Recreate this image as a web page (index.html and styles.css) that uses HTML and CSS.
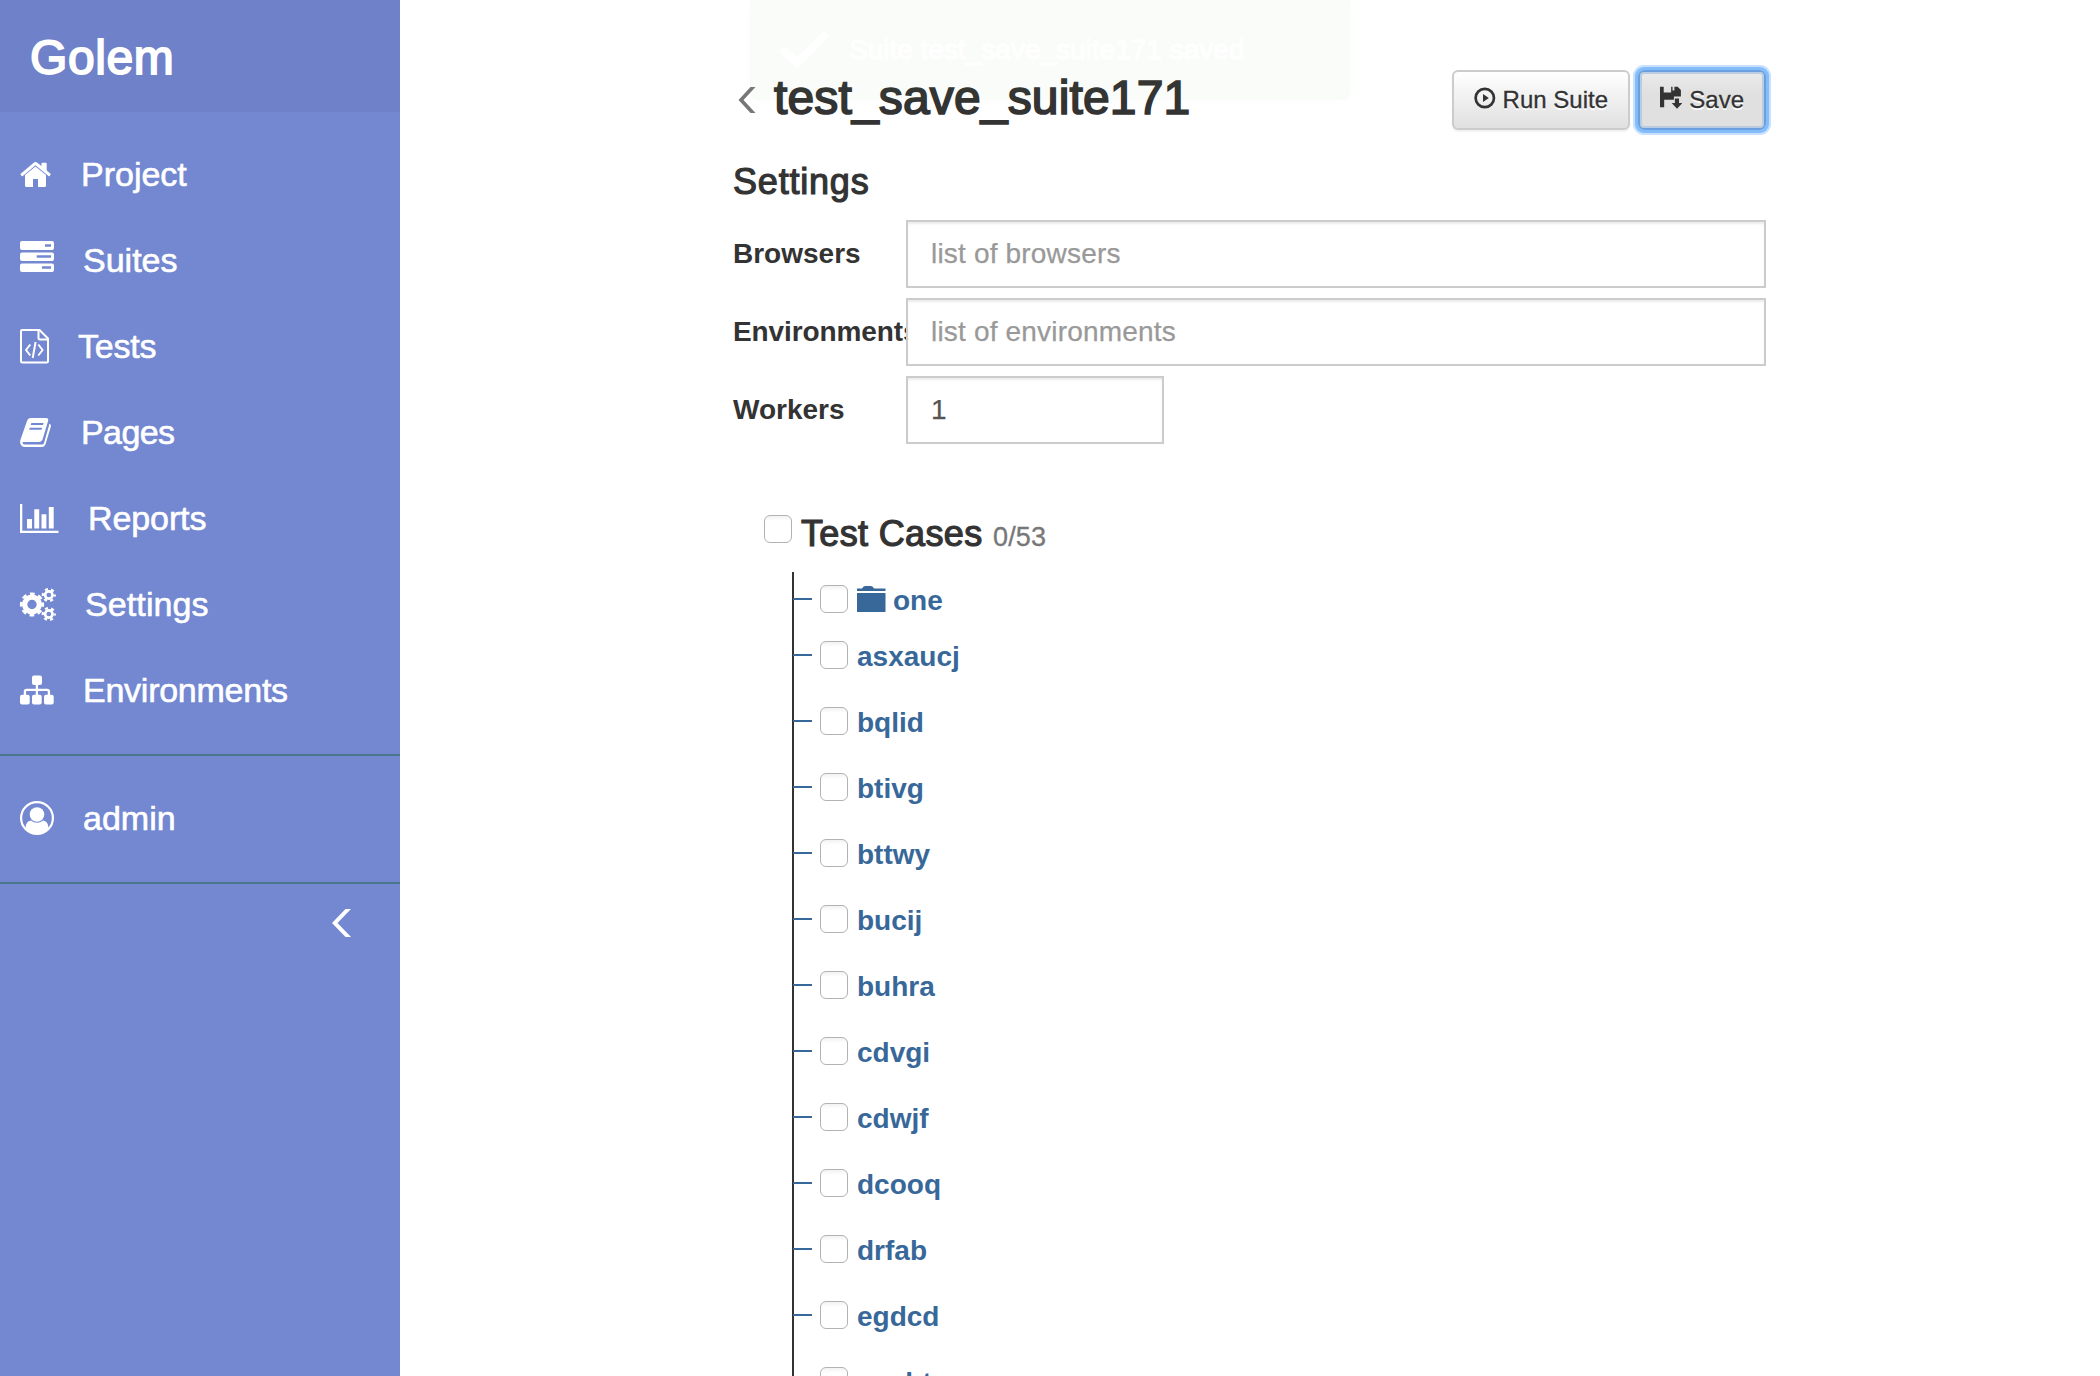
FILE: index.html
```html
<!DOCTYPE html>
<html lang="en">
<head>
<meta charset="utf-8">
<title>Golem - test_save_suite171</title>
<link rel="stylesheet" href="styles.css">
</head>
<body>
<div class="layout">
  <aside class="sidebar">
    <div class="brand">Golem</div>
    <nav class="nav">
      <a class="nav-item project"><svg class="ico" width="40" height="36" viewBox="0 0 40 36"><path d="M5 18v10.500q0 1.500 1.500 1.500H13v-8h5v8h6.500q1.500 0 1.500-1.500V18l-10.500-8.600z"/><path d="M15.500 5q1 0 1.800.7L21.500 9V6.500q0-.8.8-.8h3.600q.8 0 .8.8v7l3.800 3.200q.5.400 0 1l-1 1.300q-.5.500-1 0L15.500 8.200 2.800 19q-.6.500-1.100 0l-1-1.300q-.5-.6 0-1L13.700 5.700q.8-.7 1.800-.7z"/></svg><span>Project</span></a>
      <a class="nav-item suites"><svg class="ico" width="40" height="36" viewBox="0 0 40 36"><path fill-rule="evenodd" d="M2-2H32q2 0 2 2v5q0 2-2 2H2Q0 7 0 5V0Q0-2 2-2zM25 1.300v2.400h6V1.300zM2 9.500H32q2 0 2 2v4.500q0 2-2 2H2q-2 0-2-2v-4.500q0-2 2-2zM16.700 12.300v2.400H31v-2.400zM2 20.500H32q2 0 2 2V27q0 2-2 2H2q-2 0-2-2v-4.500q0-2 2-2zM22 23.300v2.400h9v-2.400z"/></svg><span>Suites</span></a>
      <a class="nav-item tests"><svg class="ico" width="40" height="36" viewBox="0 0 40 36"><g fill="none" stroke="#fff" stroke-width="2" stroke-linejoin="round"><path d="M2 1H19.500L28 9.500V32q0 1.500-1.500 1.500H2.500Q1 33.500 1 32V2Q1 1 2 1z"/><path d="M18.500 1V9q0 1.500 1.500 1.500h8"/><path d="M10.300 15.500L6 21l4.300 5.500M18.300 15.500L22.600 21l-4.300 5.500M15.600 13l-2.900 16" /></g></svg><span>Tests</span></a>
      <a class="nav-item pages"><svg class="ico" width="40" height="36" viewBox="0 0 40 36"><path fill-rule="evenodd" d="M11 3H26q3 0 2 3.200L22.700 24q-1 3-4 3H3.800q-1.600 0-1.300 1 .4 1.500 3 1.500H22q1.500 0 2-1.600L29 10.500q.2-.8.100-1.800 2.300.6 1.700 3L25.600 29q-1 3-3.800 3H5Q1.500 32 .3 28.500-.2 26.500.4 25L7 6Q8 3 11 3zM11.300 8l-.6 2H23l.6-2zM9.800 12.800l-.6 2H21.500l.6-2z"/></svg><span>Pages</span></a>
      <a class="nav-item reports"><svg class="ico" width="40" height="36" viewBox="0 0 40 36"><path d="M0 3h2.300v26.700H38.500V32H0zM7 18h5v9.500H7zM14.300 8.300h4.900v19.200h-4.900zM21.500 13.200h4.900v14.300h-4.900zM28.800 6h4.900v21.500h-4.900z"/></svg><span>Reports</span></a>
      <a class="nav-item settings"><svg class="ico" width="40" height="36" viewBox="0 0 40 36"><g fill="none" stroke="#fff"><circle cx="12" cy="17.500" r="7.300" stroke-width="5.200"/><circle cx="12" cy="17.500" r="10.700" stroke-width="2.800" stroke-dasharray="4.700 3.700" stroke-dashoffset="2.350"/><circle cx="28.800" cy="8" r="3.700" stroke-width="2.700"/><circle cx="28.800" cy="8" r="5.900" stroke-width="2.400" stroke-dasharray="3 3.180" stroke-dashoffset="1.500"/><circle cx="28.800" cy="27" r="3.700" stroke-width="2.700"/><circle cx="28.800" cy="27" r="5.900" stroke-width="2.400" stroke-dasharray="3 3.180" stroke-dashoffset="1.500"/></g></svg><span>Settings</span></a>
      <a class="nav-item environments"><svg class="ico" width="40" height="36" viewBox="0 0 40 36"><rect x="12" y="2.500" width="10" height="9.500" rx="2"/><rect x="0" y="21.800" width="9.700" height="9.700" rx="2"/><rect x="12" y="21.800" width="9.700" height="9.700" rx="2"/><rect x="24" y="21.800" width="9.700" height="9.700" rx="2"/><path d="M16.900 11.500v11M4.900 22.500v-4q0-1.700 1.700-1.700h20.600q1.700 0 1.700 1.700v4" fill="none" stroke="#fff" stroke-width="2.300"/></svg><span>Environments</span></a>
    </nav>
    <nav class="nav">
      <a class="nav-item admin"><svg class="ico" width="40" height="36" viewBox="0 0 40 36"><circle cx="17" cy="17" r="15.900" fill="none" stroke="#fff" stroke-width="2.200"/><circle cx="17" cy="13.500" r="7.300"/><path d="M5.500 27.500q.2-7.500 5.500-7.900 2.700 2.200 6 2.200t6-2.200q5.300.4 5.500 7.900-4.500 5.500-11.500 5.500T5.500 27.500z"/></svg><span>admin</span></a>
    </nav>
    <svg class="collapse" width="20" height="28" viewBox="0 0 20 28"><path d="M14.500 0H20L6.500 14 20 28h-5.500L1 14z" fill="#fff"/></svg>
  </aside>

  <main class="content">
    <header class="title-row">
      <svg class="back" width="20" height="28" viewBox="0 0 20 28"><path d="M13.500 1H18.500L6.500 14l12 13h-5L1.500 14z" fill="#777"/></svg>
      <h1>test_save_suite171</h1>
      <div class="actions">
        <button class="btn run"><svg width="24" height="24" viewBox="0 0 24 24"><circle cx="12" cy="12" r="10.200" fill="none" stroke="#333" stroke-width="3"/><path d="M10 7.500l6.500 4.500-6.500 4.500z" fill="#333"/></svg><span>Run Suite</span></button>
        <button class="btn save"><svg width="24" height="24" viewBox="0 0 24 24"><path d="M0 0h4v6h8V0h1.500v4h2V0H19l3.500 3.500V10.500H15V14H4.500v8H0zM16 12.500h4.500v5H24l-5.700 6-5.700-6H16z" fill="#333"/></svg><span>Save</span></button>
      </div>
    </header>

    <h2>Settings</h2>
    <form class="form">
      <label>Browsers</label><input type="text" placeholder="list of browsers">
      <label class="tight">Environments</label><input type="text" placeholder="list of environments">
      <label>Workers</label><input class="short" type="text" value="1">
    </form>

    <section class="cases">
      <div class="cases-head"><i class="check"></i><h3>Test Cases <small>0/53</small></h3></div>
      <ul class="tree">
        <li class="folder"><i class="check"></i><svg width="29" height="26" viewBox="0 0 29 26"><path d="M0 2.500h5Q6 0 8 0h6q2 0 3 2.500h11.500V5H0zM0 7h28.500v19H0z" fill="#386899"/></svg><span>one</span></li>
        <li><i class="check"></i><span>asxaucj</span></li>
        <li><i class="check"></i><span>bqlid</span></li>
        <li><i class="check"></i><span>btivg</span></li>
        <li><i class="check"></i><span>bttwy</span></li>
        <li><i class="check"></i><span>bucij</span></li>
        <li><i class="check"></i><span>buhra</span></li>
        <li><i class="check"></i><span>cdvgi</span></li>
        <li><i class="check"></i><span>cdwjf</span></li>
        <li><i class="check"></i><span>dcooq</span></li>
        <li><i class="check"></i><span>drfab</span></li>
        <li><i class="check"></i><span>egdcd</span></li>
        <li><i class="check"></i><span>eepbt</span></li>
      </ul>
    </section>
  </main>
</div>
<div class="toast"><svg width="48" height="36" viewBox="0 0 48 36"><path d="M4 19l13 12L44 4" fill="none" stroke="#fff" stroke-width="8" stroke-linecap="round"/></svg><span>Suite test_save_suite171 saved</span></div>
</body>
</html>
```
FILE: styles.css
```css
* { box-sizing: border-box; }
body {
  margin: 0;
  height: 1376px;
  overflow: hidden;
  background: #fff;
  color: #333;
  font: 28px/40px "Liberation Sans", Arial, sans-serif;
}
.layout { display: flex; height: 1376px; overflow: hidden; }

/* sidebar */
.sidebar { width: 400px; flex: none; background: #7388d1; color: #fff; }
.brand {
  height: 112px;
  padding: 3px 0 0 30px;
  background: #6f81c8;
  font-size: 48px;
  line-height: 110px;
  letter-spacing: .6px;
  -webkit-text-stroke: 1.8px #fff;
}
.nav { padding: 20px 0; border-bottom: 2px solid #49768d; }
.nav-item {
  display: flex;
  align-items: center;
  height: 86px;
  padding-left: 20px;
  font-size: 34px;
  line-height: 84px;
  -webkit-text-stroke: .6px #fff;
}
.nav-item .ico { flex: none; fill: #fff; -webkit-text-stroke: 0; overflow: visible; }
.nav-item span { margin-left: 23px; height: 86px; }
.nav-item.project span { margin-left: 21px; }
.nav-item.tests span { margin-left: 18px; letter-spacing: -.2px; }
.nav-item.pages span { margin-left: 21px; letter-spacing: -.6px; }
.nav-item.reports span { margin-left: 28px; letter-spacing: -.1px; }
.nav-item.settings span { margin-left: 25px; letter-spacing: .1px; }
.nav-item.environments span { letter-spacing: -.25px; }
.collapse { display: block; margin: 25px 0 0 331px; }

/* main column */
.content { width: 1034px; margin-left: 332px; }
.title-row { display: flex; align-items: flex-start; height: 164px; padding-top: 70px; }
.back { margin: 16px 16px 0 5px; }
h1, h2, h3 { margin: 0; font-weight: 400; }
h1 { padding: 1px 0 0 1px; font-size: 48px; line-height: 54px; letter-spacing: .15px; -webkit-text-stroke: 1.7px #333; }
h2 { height: 56px; font-size: 36px; line-height: 36px; letter-spacing: .8px; padding-left: 1px; -webkit-text-stroke: 1.2px #333; }
.actions { display: flex; gap: 8px; margin-left: auto; }
.btn {
  display: flex;
  align-items: flex-start;
  height: 60px;
  padding: 14px 20px;
  border: 2px solid #ccc;
  border-radius: 6px;
  background: linear-gradient(#fff, #e0e0e0);
  box-shadow: 0 2px 2px rgba(0, 0, 0, .06);
  color: #333;
  font: 24px/28px "Liberation Sans", Arial, sans-serif;
  text-shadow: 0 2px 0 #fff;
  -webkit-text-stroke: .3px #333;
}
.btn span { margin-left: 7px; white-space: nowrap; }
.run { width: 178px; }
.save {
  width: 128px;
  background: linear-gradient(#ebebeb, #e0e0e0 40%);
  border-color: #69a0dd;
  box-shadow: 0 0 0 3px #85bdfb, 0 0 0 5px #c8e1fe, inset 0 0 0 2px #b9cde2;
}

/* settings form */
.form { display: grid; grid-template-columns: 174px 860px; row-gap: 10px; }
.form label { font-weight: 700; line-height: 68px; white-space: nowrap; padding-left: 1px; width: 174px; height: 68px; }
.form label.tight { letter-spacing: -.1px; }
.form input {
  position: relative;
  width: 860px;
  height: 68px;
  margin: 0;
  padding: 0 23px;
  border: 2px solid #ccc;
  background: #fff;
  box-shadow: inset 0 2px 2px rgba(0, 0, 0, .075);
  color: #555;
  font: 28px "Liberation Sans", Arial, sans-serif;
  letter-spacing: .18px;
  -webkit-text-stroke: .25px;
}
.form input::placeholder { color: #999; }
.form input.short { width: 258px; }

/* test case tree */
.cases { padding: 71px 0 0 32px; }
.check {
  flex: none;
  width: 28px;
  height: 28px;
  border: 1.500px solid #b2b2b2;
  border-radius: 6px;
  background: linear-gradient(#f2f2f2, #fff 5px);
}
.cases-head { display: flex; height: 57px; }
h3 { margin-left: 9px; padding-top: 1px; font-size: 36px; line-height: 36px; letter-spacing: .35px; -webkit-text-stroke: 1.2px #333; }
h3 small { font-size: 27px; color: #777; letter-spacing: .2px; -webkit-text-stroke: .3px #777; }
.tree { list-style: none; margin: 0 0 0 28px; padding: 13px 0 0; border-left: 2px solid #333; color: #386899; font-weight: 700; }
.tree li { display: flex; height: 66px; line-height: 32px; }
.tree li.folder { height: 56px; }
.tree li::before { content: ""; flex: none; width: 19px; height: 2px; margin: 13px 8px 0 -1px; background: #386899; }
.tree span { margin-left: 9px; }
.tree svg { margin: 1px 0 0 9px; }
.tree .folder span { margin-left: 7px; }

.toast {
  position: absolute;
  left: 750px;
  top: 0;
  width: 600px;
  height: 100px;
  border-radius: 0 0 6px 6px;
  background: rgba(81, 163, 81, .03);
  box-shadow: 0 0 20px rgba(0, 0, 0, .01);
  color: #fff;
  font-size: 28px;
  line-height: 100px;
  display: flex;
  -webkit-text-stroke: 1.2px #fff;
}
.toast svg { margin: 32px 21px 0 30px; }
```
